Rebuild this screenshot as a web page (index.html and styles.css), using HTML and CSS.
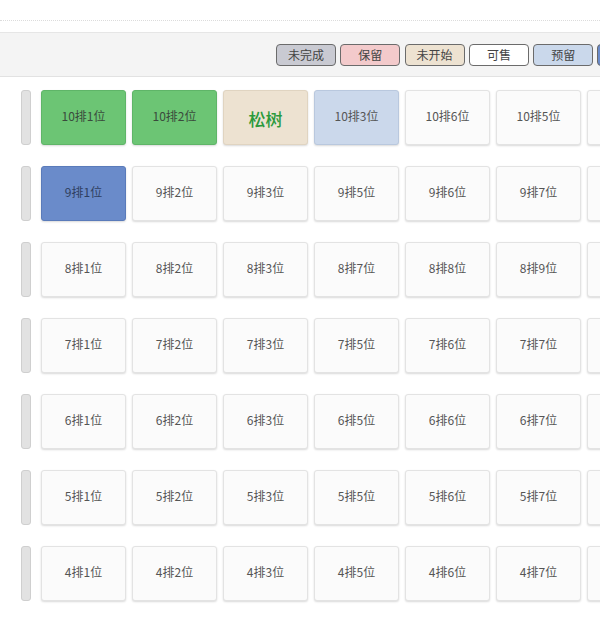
FILE: index.html
```html
<html>
<head>
	<meta charset="utf-8">
	<link rel="stylesheet" href="styles.css">
</head>
<body>
	<div class='topbar'></div>

	<div class='toolbar'>
		<span class='legend unfinished'>未完成</span>
		<span class='legend reserved'>保留</span>
		<span class='legend notstart'>未开始</span>
		<span class='legend forsale'>可售</span>
		<span class='legend booked'>预留</span>
		<span class='legend sold'></span>
	</div>

	<div class='seatmap'>
		<div class='row'>
			<div class='rowtag'></div>
			<div class='seat green'>10排1位</div>
			<div class='seat green'>10排2位</div>
			<div class='seat tan big'>松树</div>
			<div class='seat lightblue'>10排3位</div>
			<div class='seat'>10排6位</div>
			<div class='seat'>10排5位</div>
			<div class='seat'></div>
		</div>
		<div class='row'>
			<div class='rowtag'></div>
			<div class='seat blue'>9排1位</div>
			<div class='seat'>9排2位</div>
			<div class='seat'>9排3位</div>
			<div class='seat'>9排5位</div>
			<div class='seat'>9排6位</div>
			<div class='seat'>9排7位</div>
			<div class='seat'></div>
		</div>
		<div class='row'>
			<div class='rowtag'></div>
			<div class='seat'>8排1位</div>
			<div class='seat'>8排2位</div>
			<div class='seat'>8排3位</div>
			<div class='seat'>8排7位</div>
			<div class='seat'>8排8位</div>
			<div class='seat'>8排9位</div>
			<div class='seat'></div>
		</div>
		<div class='row'>
			<div class='rowtag'></div>
			<div class='seat'>7排1位</div>
			<div class='seat'>7排2位</div>
			<div class='seat'>7排3位</div>
			<div class='seat'>7排5位</div>
			<div class='seat'>7排6位</div>
			<div class='seat'>7排7位</div>
			<div class='seat'></div>
		</div>
		<div class='row'>
			<div class='rowtag'></div>
			<div class='seat'>6排1位</div>
			<div class='seat'>6排2位</div>
			<div class='seat'>6排3位</div>
			<div class='seat'>6排5位</div>
			<div class='seat'>6排6位</div>
			<div class='seat'>6排7位</div>
			<div class='seat'></div>
		</div>
		<div class='row'>
			<div class='rowtag'></div>
			<div class='seat'>5排1位</div>
			<div class='seat'>5排2位</div>
			<div class='seat'>5排3位</div>
			<div class='seat'>5排5位</div>
			<div class='seat'>5排6位</div>
			<div class='seat'>5排7位</div>
			<div class='seat'></div>
		</div>
		<div class='row'>
			<div class='rowtag'></div>
			<div class='seat'>4排1位</div>
			<div class='seat'>4排2位</div>
			<div class='seat'>4排3位</div>
			<div class='seat'>4排5位</div>
			<div class='seat'>4排6位</div>
			<div class='seat'>4排7位</div>
			<div class='seat'></div>
		</div>
	</div>
</body>
</html>
```

FILE: styles.css
```css
html {
  box-sizing: border-box;
}
*, *:before, *:after {
  box-sizing: inherit;
}

body {
	font-family: "Noto Sans CJK SC", "Liberation Sans", sans-serif;
	background: #fff;
	margin: 0;
	padding: 0;
	overflow: hidden;
	color: #555;
}

.topbar {
	height: 21px;
	border-bottom: 1px dotted #dcdcdc;
}

.toolbar {
	margin-top: 11px;
	height: 45px;
	background: #f4f4f4;
	border-top: 1px solid #e6e6e6;
	border-bottom: 1px solid #e2e2e2;
	display: flex;
	align-items: center;
	gap: 4.3px;
	padding-left: 276px;
	white-space: nowrap;
	overflow: hidden;
}
.legend {
	flex: none;
	width: 60px;
	height: 22px;
	border: 1px solid #6b6b6b;
	border-radius: 4px;
	font-size: 12px;
	line-height: 20px;
	text-align: center;
	color: #444;
}
.legend.unfinished { background: #c9cad2; }
.legend.reserved { background: #f3cacb; }
.legend.notstart { background: #ede2d1; }
.legend.forsale { background: #fff; }
.legend.booked { background: #cad8eb; }
.legend.sold { background: #6a8bca; }

.seatmap {
	padding: 13px 0 0 21px;
	display: flex;
	flex-direction: column;
	gap: 21px;
}
.row {
	display: flex;
	gap: 6px;
	height: 55px;
	white-space: nowrap;
}
.rowtag {
	flex: none;
	width: 10px;
	margin-right: 4px;
	background: #e2e2e2;
	border: 1px solid #cfcfcf;
	border-radius: 3px;
}
.seat {
	flex: none;
	width: 85px;
	height: 55px;
	background: #fbfbfb;
	border: 1px solid #e3e3e3;
	border-radius: 3px;
	box-shadow: 0 1px 2px rgba(0,0,0,.15);
	display: flex;
	align-items: center;
	justify-content: center;
	padding-bottom: 5px;
	font-size: 12px;
	color: #555;
}
.seat.green {
	background: #6cc574;
	border-color: #5fb568;
	color: #3a4a3c;
}
.seat.tan {
	background: #ede2d1;
	border-color: #e0d4c1;
}
.seat.big {
	font-size: 17px;
	color: #2b9a3c;
	font-weight: 500;
	padding-bottom: 0;
	padding-top: 1px;
}
.seat.lightblue {
	background: #cbd8eb;
	border-color: #b9c8de;
}
.seat.blue {
	background: #6a8bca;
	border-color: #5a7bba;
	color: #2f3f60;
}
```
